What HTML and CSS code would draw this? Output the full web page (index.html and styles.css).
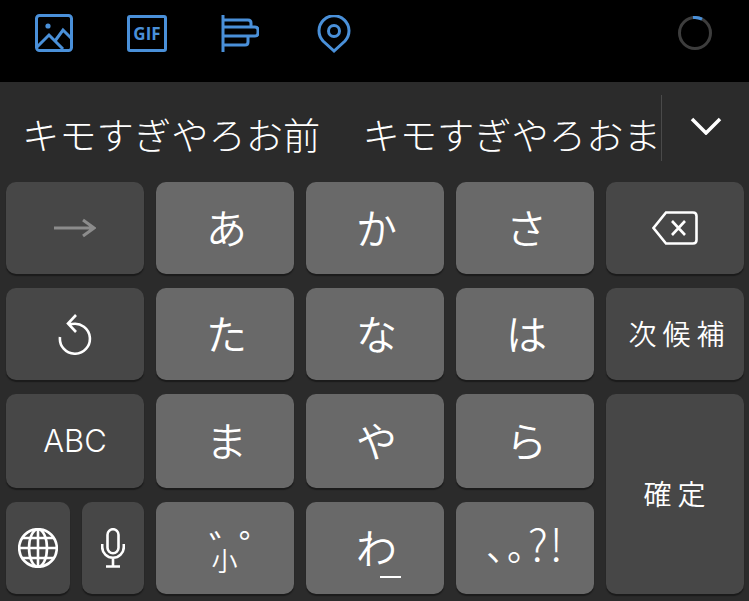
FILE: index.html
```html
<!DOCTYPE html>
<html lang="ja">
<head>
  <meta charset="UTF-8" />
  <title>Keyboard</title>
  <link rel="stylesheet" href="styles.css">
</head>
<body>

  <div class="toolbar">
    <svg class="tool tool-image" viewBox="0 0 38 38" width="38" height="38">
      <rect x="1.5" y="1.5" width="35" height="35" rx="3"/>
      <circle class="solid" cx="13" cy="12" r="2.6"/>
      <path d="M2 33 L14 21 L28 35 M20 27 L28 16 L36 24"/>
    </svg>
    <div class="gif">GIF</div>
    <svg class="tool tool-poll" viewBox="0 0 38 38" width="38" height="38">
      <path d="M2 0 V37 M2 5 H27 Q30 5 30 8 V12 H2 M30 12 H34 Q37 12 37 15 V18 Q37 21 34 21 H2 M2 21 H27 V27 Q27 30 24 30 H2"/>
    </svg>
    <svg class="tool tool-pin" viewBox="0 0 34 38" width="34" height="38">
      <path d="M17 36 L6 26 A15 15 0 1 1 28 26 Z"/>
      <circle cx="17" cy="16" r="5.5"/>
    </svg>
    <svg class="spinner" viewBox="0 0 34 34" width="34" height="34">
      <circle class="track" cx="17" cy="17" r="15.5"/>
      <path class="arc" d="M15 1.6 A15.5 15.5 0 0 1 24 3.2"/>
    </svg>
  </div>

  <div class="candidates">
    <span class="word word-first">キモすぎやろお前</span>
    <span class="word">キモすぎやろおま</span>
    <div class="more">
      <svg viewBox="0 0 32 18" width="32" height="18">
        <path d="M2 2 L16 16 L30 2"/>
      </svg>
    </div>
  </div>

  <div class="keys">
    <div class="key dark">
      <svg class="icon" viewBox="0 0 42 20" width="42" height="20">
        <path class="muted" d="M0 10 H40 M29 2 L40 10 L29 18"/>
      </svg>
    </div>
    <div class="key kana">あ</div>
    <div class="key kana">か</div>
    <div class="key kana">さ</div>
    <div class="key dark">
      <svg class="icon" viewBox="0 0 46 34" width="46" height="34">
        <path d="M14 1.5 H41 Q44.5 1.5 44.5 5 V29 Q44.5 32.5 41 32.5 H14 L1.5 17 Z M20 10 L33 24 M33 10 L20 24"/>
      </svg>
    </div>

    <div class="key dark">
      <svg class="icon" viewBox="0 0 34 42" width="34" height="42">
        <path d="M2 24 A15 15 0 1 0 14 11 H11 M18 2 L10 10.5 L18 19"/>
      </svg>
    </div>
    <div class="key kana">た</div>
    <div class="key kana">な</div>
    <div class="key kana">は</div>
    <div class="key dark label">次候補</div>

    <div class="key dark latin">ABC</div>
    <div class="key kana">ま</div>
    <div class="key kana">や</div>
    <div class="key kana">ら</div>
    <div class="key dark label confirm">確定</div>

    <div class="pair">
      <div class="key dark">
        <svg class="icon" viewBox="0 0 40 40" width="40" height="40">
          <circle cx="20" cy="20" r="18.8"/>
          <ellipse cx="20" cy="20" rx="9" ry="18.8"/>
          <path d="M20 1 V39 M1.2 20 H38.8 M4.5 10 H35.5 M4.5 30 H35.5"/>
        </svg>
      </div>
      <div class="key dark">
        <svg class="icon" viewBox="0 0 24 40" width="24" height="40">
          <rect x="6.5" y="1.2" width="11" height="24" rx="5.5"/>
          <path d="M1.2 16 V19 A10.8 10.8 0 0 0 22.8 19 V16 M12 30 V38 M5 38.5 H19"/>
        </svg>
      </div>
    </div>
    <div class="key kana marks">
      <span class="dakuten">゛</span>
      <span class="handakuten">゜</span>
      <span class="small-kana">小</span>
    </div>
    <div class="key kana wa">わ<span class="wa-line"></span></div>
    <div class="key kana punct"><span class="punct-jp">、。</span><span class="punct-latin">?!</span></div>
  </div>

</body>
</html>
```

FILE: styles.css
```css
:root {
  --bar: #2b2b2b;
  --key-kana: #696969;
  --key-dark: #474747;
  --key-shadow: #1b1b1b;
  --blue: #4a90d9;
}

body {
  margin: 0;
  width: 749px;
  height: 601px;
  overflow: hidden;
  background: var(--bar);
  color: #fff;
  font-family: "Noto Sans CJK JP", "Noto Sans", sans-serif;
}

svg path, svg rect, svg circle, svg ellipse {
  fill: none;
}

.toolbar {
  height: 82px;
  background: #000;
  display: flex;
  align-items: flex-start;
  box-sizing: border-box;
  padding: 14px 0 0 35px;
}

.tool path, .tool rect, .tool circle {
  stroke: var(--blue);
  stroke-width: 3;
}

.tool circle.solid {
  fill: var(--blue);
  stroke: none;
}

.gif {
  width: 40px;
  height: 37px;
  box-sizing: border-box;
  margin: 1px 0 0 54px;
  border: 3px solid var(--blue);
  border-radius: 3px;
  color: var(--blue);
  font: bold 17px/31px "Open Sans", sans-serif;
  text-align: center;
}

.tool-poll {
  margin: 1px 0 0 54px;
}

.tool-pin {
  margin: 1px 0 0 58px;
}

.spinner {
  margin: 2px 0 0 327px;
}

.spinner .track {
  stroke: #3d3d3d;
  stroke-width: 3;
}

.spinner .arc {
  stroke: var(--blue);
  stroke-width: 3;
}

.candidates {
  height: 100px;
  display: flex;
  align-items: flex-start;
  box-sizing: border-box;
  padding: 25px 0 0 22px;
  font-size: 37.3px;
  font-weight: 300;
  line-height: 54px;
}

.word {
  white-space: nowrap;
}

.word-first {
  margin-right: 42px;
}

.more {
  display: flex;
  align-items: flex-start;
  margin-top: -12px;
  height: 66px;
  padding: 22px 0 0 28px;
  box-sizing: border-box;
  border-left: 1px solid #4a4a4a;
}

.more path {
  stroke: #fff;
  stroke-width: 3.5;
}

.keys {
  display: grid;
  grid-template-columns: repeat(5, 138px);
  grid-template-rows: 92px 92px 94px 92px;
  column-gap: 12px;
  row-gap: 14px;
  padding-left: 6px;
}

.key {
  position: relative;
  display: flex;
  align-items: center;
  justify-content: center;
  border-radius: 10px;
  box-shadow: 0 2px 1px var(--key-shadow);
}

.kana {
  background: var(--key-kana);
  font-size: 41px;
  font-weight: 350;
  padding: 0 0 4px 3px;
}

.dark {
  background: var(--key-dark);
}

.icon path, .icon rect, .icon circle, .icon ellipse {
  stroke: #fff;
  stroke-width: 2.6;
}

.icon path.muted {
  stroke: #8c8c8c;
  stroke-width: 3;
}

.label {
  font-size: 28px;
  font-weight: 350;
  letter-spacing: 6px;
  padding: 0 0 3px 9px;
}

.latin {
  font: 350 31px "Inter", sans-serif;
  padding-bottom: 2px;
}

.confirm {
  grid-row: span 2;
  padding-left: 5px;
}

.pair {
  display: grid;
  grid-template-columns: 64px 62px;
  column-gap: 12px;
}

.dakuten, .handakuten {
  position: absolute;
  font-size: 40px;
  line-height: 40px;
}

.dakuten {
  top: 26px;
  left: 53px;
}

.handakuten {
  top: 25px;
  left: 83px;
}

.small-kana {
  font-size: 26px;
  margin: 27px 4px 0 0;
}

.wa-line {
  position: absolute;
  left: 74px;
  bottom: 16px;
  width: 21px;
  height: 2px;
  background: #fff;
}

.punct {
  justify-content: flex-start;
  padding: 0 0 0 30px;
}

.punct-jp {
  font-size: 36px;
  letter-spacing: 3px;
  margin-top: -6px;
}

.punct-latin {
  font-size: 44px;
  font-weight: 300;
  line-height: 44px;
  margin: -12px 0 0 -18px;
  letter-spacing: 2px;
}
```
